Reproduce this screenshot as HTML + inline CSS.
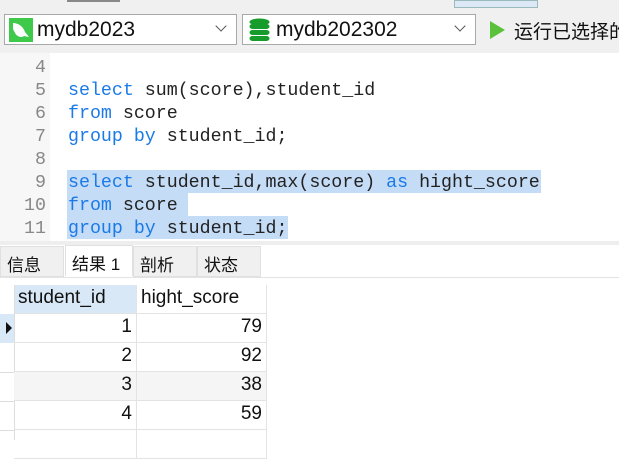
<!DOCTYPE html>
<html><head><meta charset="utf-8"><style>
body{margin:0;width:619px;height:440px;overflow:hidden;background:#fff;font-family:"Liberation Sans","Noto Sans CJK SC",sans-serif;position:relative}
.top{position:absolute;left:0;top:0;width:619px;height:53px;background:#f0f0f0}
.combo{position:absolute;top:14px;height:31px;background:#fff;border:1px solid #a8a8a8;box-sizing:border-box}
.combo span{position:absolute;left:32px;top:3px;font-size:21px;color:#111}
.combo .ar{position:absolute;right:11px;top:7px;width:7px;height:7px;border-right:1px solid #555;border-bottom:1px solid #555;transform:rotate(45deg)}
.ed{position:absolute;left:0;top:53px;width:619px;height:188px;background:#fff}
.gut{position:absolute;left:0;top:53px;width:50px;height:188px;background:#f7f7f7}
.ln{position:absolute;left:0;width:46px;text-align:right;font:18.3px "Liberation Mono",monospace;color:#888}
.cd{position:absolute;left:68px;font:18.3px "Liberation Mono",monospace;color:#222;white-space:pre}
.k{color:#1a7ae8}
.sel{position:absolute;background:#c5dcf6;height:23px}
.tabs{position:absolute;top:241px;left:0;width:619px;height:37px;background:#fff;border-top:4px solid #eee;box-sizing:border-box}
.tab{position:absolute;top:246px;height:31px;background:#f0f0f0;border:1px solid #e0e0e0;box-sizing:border-box;font-size:17px;padding:4px 0 0 6px;color:#111}
.cell{position:absolute;height:29px;box-sizing:border-box;border-right:1px solid #e3e3e3;border-bottom:1px solid #e3e3e3;font-size:19px;color:#111;padding:2px 4px;text-align:right}
</style></head><body>
<div class="top"></div>
<div style="position:absolute;left:67px;top:0;width:53px;height:2px;background:#888"></div>
<div style="position:absolute;left:454px;top:0;width:82px;height:6px;background:#dde8f6;border:1px solid #9bb"></div>
<div class="combo" style="left:4px;width:233px"><svg style="position:absolute;left:4px;top:3px" width="24" height="24"><rect width="24" height="24" fill="#3fc94b"/><path d="M4 5c5 0 10 3 12 9l4 5-5-1c-2 2-7 1-9-3L4 11z" fill="#fff"/></svg><span>mydb2023</span><div class="ar"></div></div>
<div class="combo" style="left:242px;width:234px"><svg style="position:absolute;left:6px;top:3px" width="21" height="24"><g fill="#169c2a"><ellipse cx="10.5" cy="4" rx="10" ry="3.5"/><rect x=".5" y="6" width="20" height="5" rx="3"/><rect x=".5" y="12" width="20" height="5" rx="3"/><rect x=".5" y="18" width="20" height="5" rx="3"/></g></svg><span style="left:33px">mydb202302</span><div class="ar"></div></div>
<svg style="position:absolute;left:490px;top:21px" width="15" height="18"><path d="M0 0L15 9L0 18Z" fill="#5ac13a"/></svg>
<div style="position:absolute;left:514px;top:17px;font-size:19px;white-space:nowrap;color:#111">运行已选择的</div>
<div class="ed"></div><div class="gut"></div>
<div class="sel" style="left:67px;top:170px;width:474px"></div>
<div class="sel" style="left:67px;top:193px;width:121px"></div>
<div class="sel" style="left:67px;top:216px;width:221px"></div>
<div class="ln" style="top:58px">4</div>
<div class="ln" style="top:81px">5</div><div class="cd" style="top:81px"><span class="k">select</span> sum(score),student_id</div>
<div class="ln" style="top:104px">6</div><div class="cd" style="top:104px"><span class="k">from</span> score</div>
<div class="ln" style="top:127px">7</div><div class="cd" style="top:127px"><span class="k">group by</span> student_id;</div>
<div class="ln" style="top:150px">8</div>
<div class="ln" style="top:173px">9</div><div class="cd" style="top:173px"><span class="k">select</span> student_id,max(score) <span class="k">as</span> hight_score</div>
<div class="ln" style="top:196px">10</div><div class="cd" style="top:196px"><span class="k">from</span> score</div>
<div class="ln" style="top:219px">11</div><div class="cd" style="top:219px"><span class="k">group by</span> student_id;</div>
<div class="tabs"></div>
<div class="tab" style="left:0;width:64px">信息</div>
<div class="tab" style="left:65px;width:68px;background:#fff;top:245px;border-bottom:none">结果 1</div>
<div class="tab" style="left:133px;width:64px">剖析</div>
<div class="tab" style="left:197px;width:64px">状态</div>
<div style="position:absolute;left:0;top:277px;width:619px;height:1px;background:#e3e3e3"></div>
<div class="cell" style="left:14px;top:285px;width:123px;background:#d9e8f7;text-align:left">student_id</div>
<div class="cell" style="left:137px;top:285px;width:130px;background:#fff;text-align:left">hight_score</div>
<div style="position:absolute;left:0;top:314px;width:14px;height:29px;background:#d9e8f7"></div>
<svg style="position:absolute;left:6px;top:322px" width="6" height="12"><path d="M0 0L6 6L0 12Z" fill="#111"/></svg>
<div style="position:absolute;left:0;top:372px;width:14px;height:1px;background:#ddd"></div>
<div style="position:absolute;left:0;top:401px;width:14px;height:1px;background:#ddd"></div>
<div style="position:absolute;left:0;top:430px;width:14px;height:1px;background:#ddd"></div>
<div style="position:absolute;left:14px;top:285px;width:1px;height:155px;background:#ddd"></div>
<div class="cell" style="left:14px;top:314px;width:123px">1</div><div class="cell" style="left:137px;top:314px;width:130px">79</div>
<div class="cell" style="left:14px;top:343px;width:123px">2</div><div class="cell" style="left:137px;top:343px;width:130px">92</div>
<div class="cell" style="left:14px;top:372px;width:123px;background:#f5f5f5">3</div><div class="cell" style="left:137px;top:372px;width:130px;background:#f5f5f5">38</div>
<div class="cell" style="left:14px;top:401px;width:123px">4</div><div class="cell" style="left:137px;top:401px;width:130px">59</div>
<div class="cell" style="left:14px;top:430px;width:123px"></div><div class="cell" style="left:137px;top:430px;width:130px"></div>
</body></html>
